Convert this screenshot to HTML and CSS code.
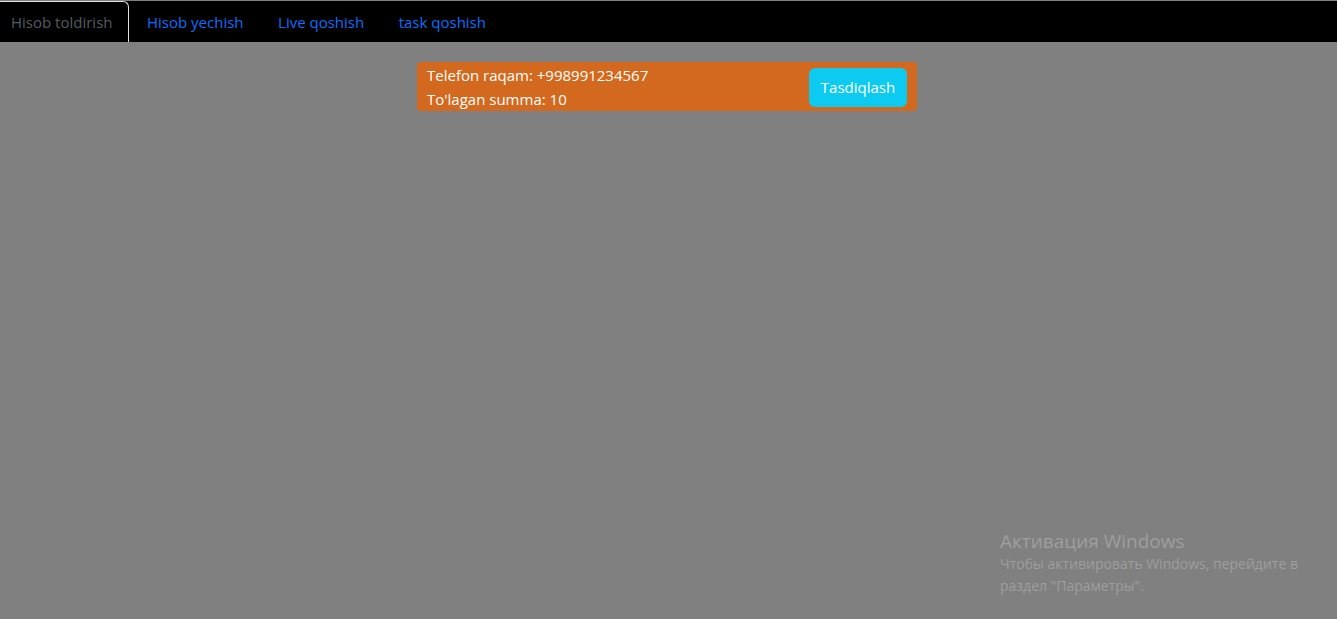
FILE: index.html
```html
<!DOCTYPE html>
<html lang="uz">
<head>
<meta charset="utf-8">
<title>Hisob</title>
<link rel="stylesheet" href="styles.css">
</head>
<body>
<nav class="tabs">
  <a class="tab tab-active">Hisob toldirish</a>
  <a class="tab">Hisob yechish</a>
  <a class="tab">Live qoshish</a>
  <a class="tab">task qoshish</a>
</nav>
<main class="content">
  <div class="card">
    <div class="info">
      <div>Telefon raqam: +998991234567</div>
      <div>To'lagan summa: 10</div>
    </div>
    <button class="btn">Tasdiqlash</button>
  </div>
</main>
<div class="watermark">
  <div class="wm-title">Активация Windows</div>
  <div class="wm-text">Чтобы активировать Windows, перейдите в<br>раздел "Параметры".</div>
</div>
</body>
</html>
```
FILE: styles.css
```css
html, body {
  margin: 0;
  padding: 0;
}
body {
  background: #808080;
  font-family: "Open Sans", "Noto Sans", sans-serif;
  font-size: 15px;
  padding-top: 1px;
  height: 618px;
  overflow: hidden;
}
.tabs {
  display: flex;
  background: #000;
  height: 41px;
  align-items: stretch;
}
.tab {
  display: flex;
  align-items: center;
  padding: 0 16px;
  border: 1px solid transparent;
  border-bottom: none;
  color: #0d6efd;
  font-size: 15px;
  cursor: pointer;
}
.tab + .tab {
  margin-left: 0.5px;
}
.tab-active {
  color: #555a60;
  border-color: #dee2e6;
  border-radius: 6px 6px 0 0;
  margin-left: -6px;
}
.content {
  display: flex;
  justify-content: center;
  padding-top: 20px;
  padding-right: 3px;
}
.card {
  width: 500px;
  box-sizing: border-box;
  background: #d2691e;
  border-radius: 4px;
  display: flex;
  align-items: center;
  justify-content: space-between;
  padding: 1px 10px 0 10px;
  color: #fff;
  line-height: 24px;
}
.btn {
  background: #0dcaf0;
  color: #fff;
  border: none;
  border-radius: 6px;
  font-family: inherit;
  font-size: 15px;
  height: 39px;
  width: 98px;
  padding: 0;
}
.watermark {
  position: absolute;
  left: 1000px;
  top: 529px;
  color: #9e9e9e;
}
.wm-title {
  font-size: 19px;
  line-height: 24px;
}
.wm-text {
  font-size: 14px;
  line-height: 22px;
}
```
